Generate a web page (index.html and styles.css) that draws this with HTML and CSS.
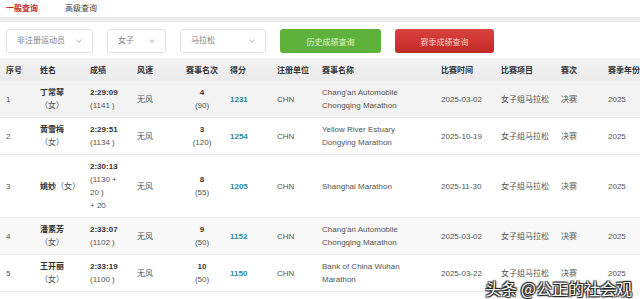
FILE: index.html
```html
<!DOCTYPE html>
<html lang="zh-CN">
<head>
  <meta charset="UTF-8" />
  <title>成绩查询</title>
  <link rel="stylesheet" href="styles.css">
</head>
<body>
  <div class="page">
    <div class="tabs">
      <span class="tab active">一般查询</span>
      <span class="tab">高级查询</span>
    </div>

    <div class="filters">
      <div class="select w1">非注册运动员<span class="chev"></span></div>
      <div class="select w2">女子<span class="chev"></span></div>
      <div class="select w3">马拉松<span class="chev"></span></div>
      <button class="btn green">历史成绩查询</button>
      <button class="btn red">赛季成绩查询</button>
    </div>

    <table class="results">
      <colgroup>
        <col style="width:34px"><col style="width:50px"><col style="width:47px"><col style="width:49px">
        <col style="width:44px"><col style="width:47px"><col style="width:45px"><col style="width:119px">
        <col style="width:60px"><col style="width:60px"><col style="width:47px"><col style="width:78px">
      </colgroup>
      <thead>
        <tr>
          <th>序号</th><th>姓名</th><th>成绩</th><th>风速</th><th class="c">赛事名次</th><th>得分</th>
          <th>注册单位</th><th>赛事名称</th><th>比赛时间</th><th>比赛项目</th><th>赛次</th><th>赛季年份</th>
        </tr>
      </thead>
      <tbody>
        <tr class="alt">
          <td>1</td>
          <td class="name"><b>丁常琴</b>（女）</td>
          <td><b>2:29:09</b><br>(1141 )</td>
          <td>无风</td>
          <td class="c"><b>4</b><br>(90)</td>
          <td class="score">1231</td>
          <td>CHN</td>
          <td>Chang'an Automobile Chongqing Marathon</td>
          <td>2025-03-02</td><td>女子组马拉松</td><td>决赛</td><td>2025</td>
        </tr>
        <tr>
          <td>2</td>
          <td class="name"><b>黄雪梅</b>（女）</td>
          <td><b>2:29:51</b><br>(1134 )</td>
          <td>无风</td>
          <td class="c"><b>3</b><br>(120)</td>
          <td class="score">1254</td>
          <td>CHN</td>
          <td>Yellow River Estuary Dongying Marathon</td>
          <td>2025-10-19</td><td>女子组马拉松</td><td>决赛</td><td>2025</td>
        </tr>
        <tr>
          <td>3</td>
          <td class="name"><b>姚妙</b>（女）</td>
          <td><b>2:30:13</b><br>(1130 +<br>20 )<br>+ 20</td>
          <td>无风</td>
          <td class="c"><b>8</b><br>(55)</td>
          <td class="score">1205</td>
          <td>CHN</td>
          <td>Shanghai Marathon</td>
          <td>2025-11-30</td><td>女子组马拉松</td><td>决赛</td><td>2025</td>
        </tr>
        <tr class="alt2">
          <td>4</td>
          <td class="name"><b>潘素芳</b>（女）</td>
          <td><b>2:33:07</b><br>(1102 )</td>
          <td>无风</td>
          <td class="c"><b>9</b><br>(50)</td>
          <td class="score">1152</td>
          <td>CHN</td>
          <td>Chang'an Automobile Chongqing Marathon</td>
          <td>2025-03-02</td><td>女子组马拉松</td><td>决赛</td><td>2025</td>
        </tr>
        <tr>
          <td>5</td>
          <td class="name"><b>王开丽</b>（女）</td>
          <td><b>2:33:19</b><br>(1100 )</td>
          <td>无风</td>
          <td class="c"><b>10</b><br>(50)</td>
          <td class="score">1150</td>
          <td>CHN</td>
          <td>Bank of China Wuhan Marathon</td>
          <td>2025-03-22</td><td>女子组马拉松</td><td>决赛</td><td>2025</td>
        </tr>
      </tbody>
    </table>

    <div class="watermark">头条 @公正的社会观</div>
  </div>
</body>
</html>
```

FILE: styles.css
```css
html, body {
  margin: 0;
  padding: 0;
  background: #fff;
  overflow: hidden;
}
body {
  font-family: 'Liberation Sans', 'Noto Sans CJK SC', sans-serif;
  font-size: 8px;
  color: #555;
}
.page {
  position: relative;
  width: 640px;
  height: 299px;
  overflow: hidden;
}
.tabs {
  display: flex;
  gap: 27px;
  height: 17px;
  align-items: center;
  padding-left: 6px;
  border-bottom: 5px solid #eeeeee;
}
.tab {
  color: #444;
  line-height: 10px;
}
.tab.active {
  color: #c7262c;
  font-weight: bold;
}
.filters {
  display: flex;
  gap: 14px;
  padding: 7px 0 0 6px;
  height: 24px;
}
.select {
  position: relative;
  box-sizing: border-box;
  height: 24px;
  border: 1px solid #e2e2e2;
  border-radius: 3px;
  padding-left: 10px;
  line-height: 22px;
  color: #808080;
}
.w1 { width: 87px; }
.w2 { width: 59px; }
.w3 { width: 86px; }
.chev {
  position: absolute;
  right: 11px;
  top: 8px;
  width: 3px;
  height: 3px;
  border-right: 1px solid #c4c4c4;
  border-bottom: 1px solid #c4c4c4;
  transform: rotate(45deg);
}
.btn {
  height: 24px;
  border: none;
  border-radius: 3px;
  font-family: 'Noto Sans CJK SC', sans-serif;
  font-size: 8px;
  padding: 0;
  cursor: pointer;
}
.btn.green {
  width: 101px;
  background: #5eb13a;
  color: #e4f3d8;
}
.btn.red {
  width: 99px;
  background: linear-gradient(#d8423e, #c22a27);
  color: #f6d0cc;
}
.results {
  margin-top: 5px;
  width: 680px;
  table-layout: fixed;
  border-collapse: collapse;
}
.results th {
  height: 22px;
  padding: 0 0 0 6px;
  text-align: left;
  font-weight: bold;
  color: #333;
  background: linear-gradient(#f4f4f4, #ebebeb);
  white-space: nowrap;
  border-bottom: 1px solid #f0f0f0;
}
.results td {
  padding: 5px 6px 5px 6px;
  line-height: 13px;
  vertical-align: middle;
  border-bottom: 1px solid #ececec;
}
.results td.name {
  padding-right: 2px;
}
.results th.c, .results td.c {
  text-align: center;
  padding: 5px 0;
}
.results th.c { padding: 0; }
.results b {
  color: #333;
}
.results tr.alt td { background: #f3f3f3; }
.results tr.alt2 td { background: #f8f8f8; }
.results td.score {
  color: #2c8aa3;
  font-weight: bold;
}
.watermark {
  position: absolute;
  right: 8px;
  bottom: 1px;
  font-family: 'Noto Sans CJK SC', sans-serif;
  font-size: 16px;
  line-height: 20px;
  color: #fff;
  text-shadow: 0 0 1px #222, 1px 1px 1px #222, -1px -1px 1px #222, 1px -1px 1px #222, -1px 1px 1px #222;
}
```
